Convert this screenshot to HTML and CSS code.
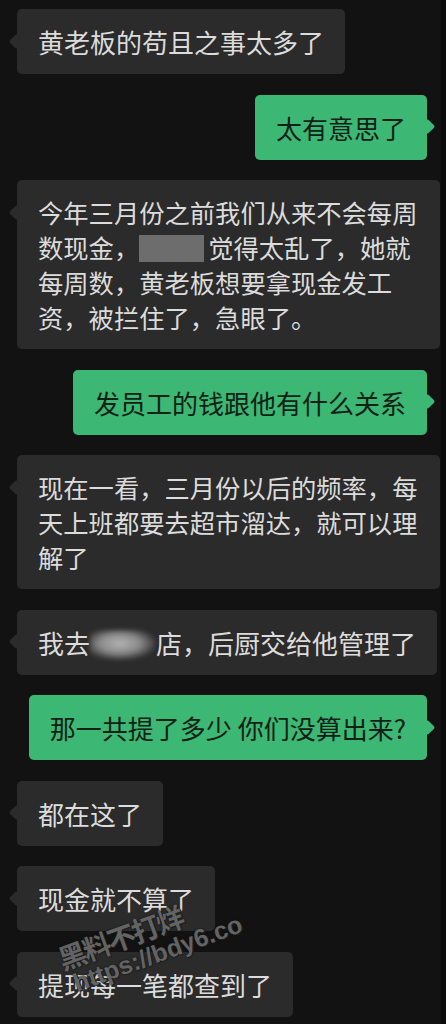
FILE: index.html
```html
<!DOCTYPE html>
<html lang="zh-CN">
<head>
    <meta charset="UTF-8">
    <meta name="viewport" content="width=device-width, initial-scale=1.0">
    <title>聊天记录</title>
    <link rel="stylesheet" href="styles.css">
</head>
<body>

    <div class="chat">
        <div class="row left">
            <div class="bubble">黄老板的苟且之事太多了</div>
        </div>

        <div class="row right">
            <div class="bubble me">太有意思了</div>
        </div>

        <div class="row left">
            <div class="bubble long">今年三月份之前我们从来不会每周数现金，<span class="mask"></span>觉得太乱了，她就每周数，黄老板想要拿现金发工资，被拦住了，急眼了。</div>
        </div>

        <div class="row right">
            <div class="bubble me">发员工的钱跟他有什么关系</div>
        </div>

        <div class="row left">
            <div class="bubble long">现在一看，三月份以后的频率，每天上班都要去超市溜达，就可以理解了</div>
        </div>

        <div class="row left">
            <div class="bubble single">我去<span class="smudge"></span>店，后厨交给他管理了</div>
        </div>

        <div class="row right">
            <div class="bubble me">那一共提了多少 你们没算出来?</div>
        </div>

        <div class="row left">
            <div class="bubble">都在这了</div>
        </div>

        <div class="row left">
            <div class="bubble">现金就不算了</div>
        </div>

        <div class="row left">
            <div class="bubble">提现每一笔都查到了</div>
        </div>

        <!-- 水印 -->
        <div class="watermark">
            <div class="wm-title">黑料不打烊</div>
            <div class="wm-url">https://bdy6.co</div>
        </div>
    </div>

</body>
</html>
```

FILE: styles.css
```css
body {
    margin: 0;
    background-color: #0b0b0b;
    font-family: 'Noto Sans CJK SC', 'Noto Sans', sans-serif;
}
.chat {
    position: relative;
    width: 441px;
    height: 1024px;
    box-sizing: border-box;
    padding-top: 9px;
    background-color: #121212;
    display: flex;
    flex-direction: column;
    gap: 20.5px;
    overflow: hidden;
}
.row {
    display: flex;
}
.row.left {
    justify-content: flex-start;
    padding-left: 17px;
}
.row.right {
    justify-content: flex-end;
    padding-right: 14px;
}
.bubble {
    position: relative;
    max-width: 423px;
    box-sizing: border-box;
    padding: 15px 21px;
    background-color: #2b2b2b;
    color: #dcdcdc;
    font-size: 26px;
    line-height: 35px;
    border-radius: 5px;
}
.bubble::before {
    content: "";
    position: absolute;
    top: 26.5px;
    left: -6px;
    width: 11px;
    height: 11px;
    background-color: inherit;
    border-radius: 2px;
    transform: rotate(45deg);
}
.bubble.long {
    font-size: 25.3px;
    padding-bottom: 14px;
}
.bubble.single {
    white-space: nowrap;
}
.bubble.me {
    background-color: #3db774;
    color: #0f2116;
}
.bubble.me::before {
    left: auto;
    right: -6px;
}
.mask {
    display: inline-block;
    width: 65px;
    height: 27px;
    margin: 0 4px 0 0;
    vertical-align: -4px;
    background-color: #6d6d6d;
}
.smudge {
    display: inline-block;
    width: 66px;
    height: 30px;
    vertical-align: -6px;
    background: radial-gradient(ellipse at 45% 45%, #b4b4b4 0%, #8a8a8a 40%, rgba(70, 70, 70, 0) 75%);
    filter: blur(2px);
}
.watermark {
    position: absolute;
    left: 54px;
    top: 946px;
    transform: rotate(-20deg);
    transform-origin: left top;
    font-weight: bold;
    color: rgba(115, 115, 115, 0.85);
    text-shadow: 0 0 2px #111, 1px 1px 0 #222;
    line-height: 1;
}
.wm-title {
    font-size: 28px;
    letter-spacing: -2px;
}
.wm-url {
    font-family: 'Liberation Sans', sans-serif;
    font-size: 25px;
    margin-left: 6px;
    margin-top: 2px;
}
```
